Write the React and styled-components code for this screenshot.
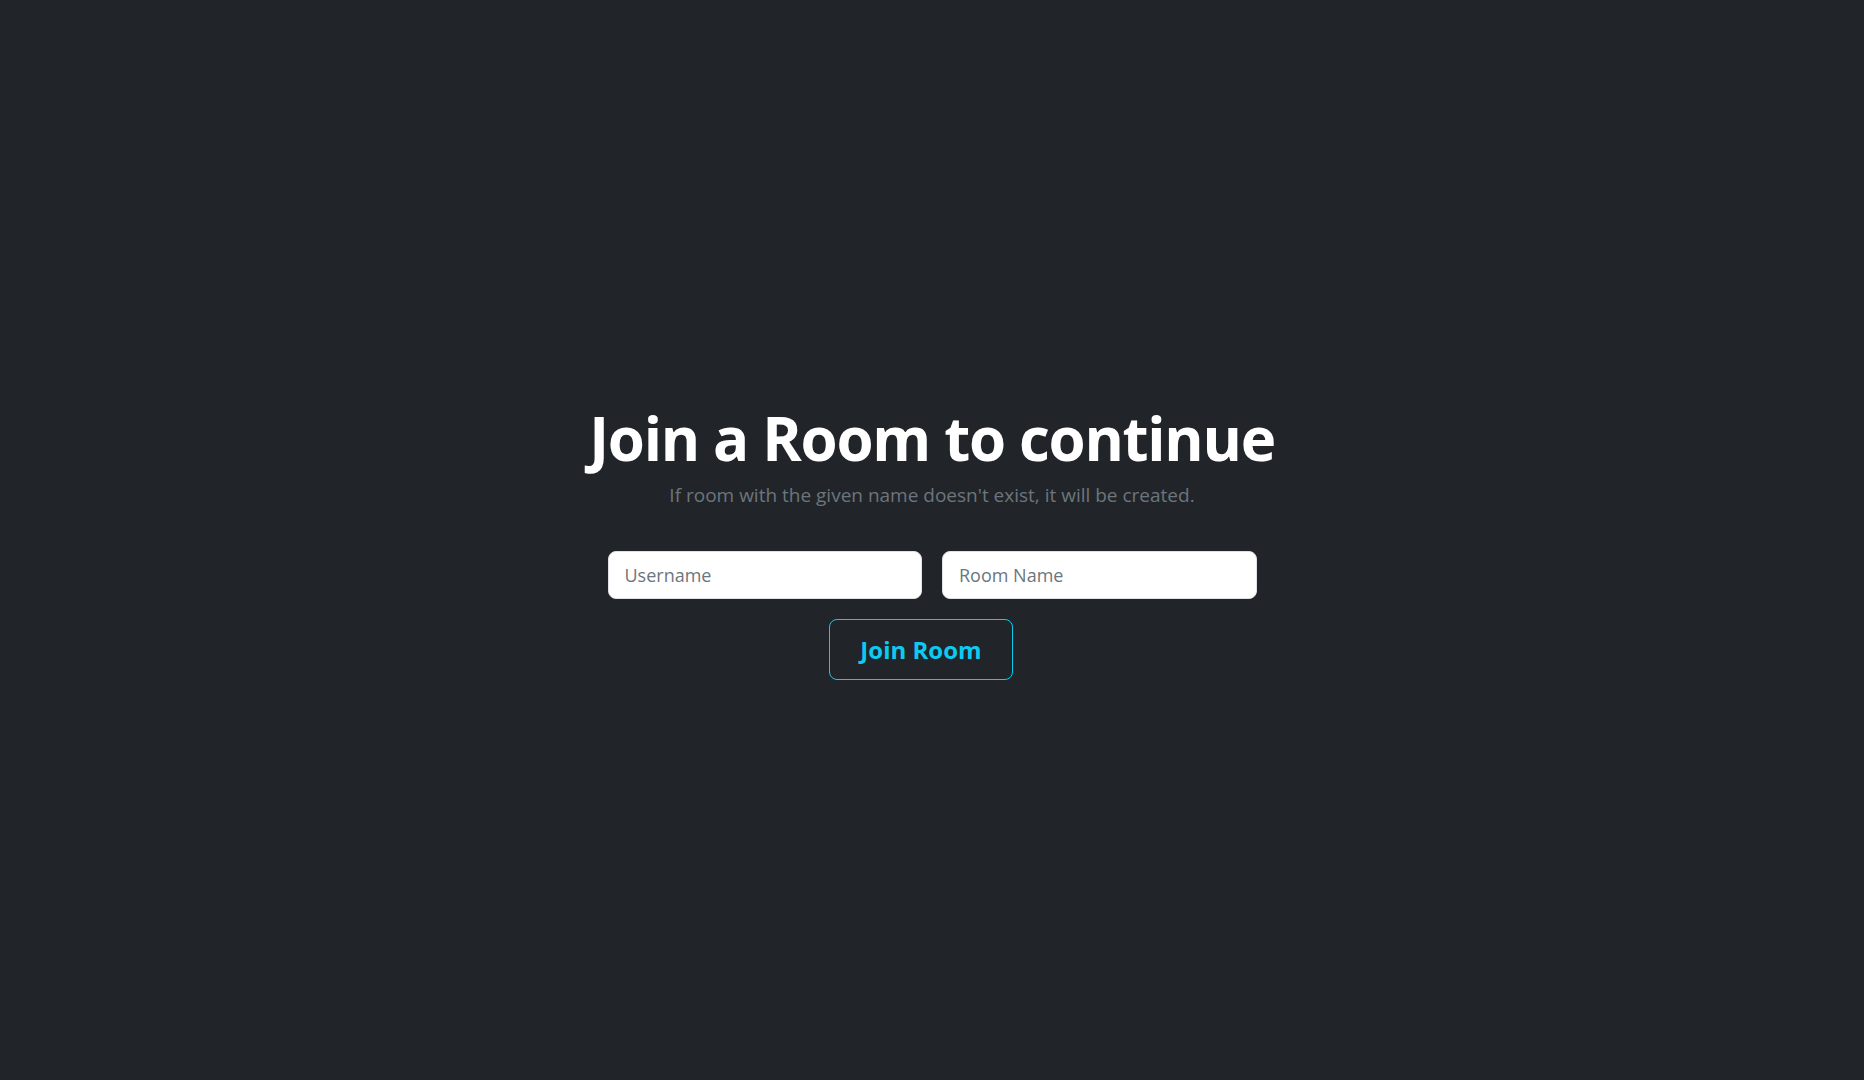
import React from "react";
import styled, { createGlobalStyle } from "styled-components";

const GlobalStyle = createGlobalStyle`
  * {
    box-sizing: border-box;
  }

  body {
    margin: 0;
    background: #212529;
    font-family: "Open Sans", "Noto Sans", sans-serif;
    color: #dee2e6;
  }
`;

const Page = styled.main`
  min-height: 100vh;
  display: flex;
  align-items: center;
  justify-content: center;
`;

const Wrapper = styled.section`
  display: flex;
  flex-direction: column;
  align-items: center;
  width: 649px;
  margin-top: 2px;
`;

const Title = styled.h1`
  margin: 0;
  font-size: 60px;
  font-weight: 700;
  line-height: 1.2;
  letter-spacing: -1.3px;
  color: #fff;
  white-space: nowrap;
`;

const Lead = styled.p`
  margin: 7px 0 0;
  font-size: 19px;
  line-height: 1.5;
  color: #6c757d;
`;

const Form = styled.form`
  display: flex;
  flex-direction: column;
  align-items: center;
  width: 100%;
  margin-top: 42px;
  gap: 20px;
`;

const Fields = styled.div`
  display: grid;
  grid-template-columns: 1fr 1fr;
  gap: 20px;
  width: 100%;
`;

const Input = styled.input`
  display: block;
  width: 100%;
  height: 48px;
  padding: 8px 16px;
  font-family: inherit;
  font-size: 18px;
  line-height: 1.5;
  color: #212529;
  background: #fff;
  border: 1px solid #dee2e6;
  border-radius: 8px;
  outline: none;

  &::placeholder {
    color: #6c757d;
  }
`;

const Button = styled.button`
  margin-right: 22px;
  padding: 11.5px 30px;
  font-family: inherit;
  font-size: 24px;
  font-weight: 700;
  line-height: 36px;
  color: #0dcaf0;
  background: transparent;
  border: 1px solid #0dcaf0;
  border-radius: 8px;
  cursor: pointer;
`;

export default function App() {
  return (
    <>
      <GlobalStyle />
      <Page>
        <Wrapper>
          <Title>Join a Room to continue</Title>
          <Lead>If room with the given name doesn't exist, it will be created.</Lead>
          <Form onSubmit={(e) => e.preventDefault()}>
            <Fields>
              <Input type="text" placeholder="Username" />
              <Input type="text" placeholder="Room Name" />
            </Fields>
            <Button type="submit">Join Room</Button>
          </Form>
        </Wrapper>
      </Page>
    </>
  );
}
